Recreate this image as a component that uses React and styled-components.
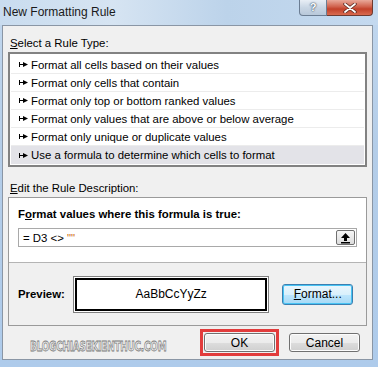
import React from "react";
import styled, { createGlobalStyle } from "styled-components";

const GlobalStyle = createGlobalStyle`
  html, body { margin: 0; padding: 0; }
  body {
    width: 378px;
    height: 367px;
    overflow: hidden;
    font-family: "Liberation Sans", Arial, sans-serif;
    font-size: 11.4px;
    color: #000;
  }
`;

const rules = [
  "Format all cells based on their values",
  "Format only cells that contain",
  "Format only top or bottom ranked values",
  "Format only values that are above or below average",
  "Format only unique or duplicate values",
  "Use a formula to determine which cells to format",
];

const Arrow = () => (
  <svg width="9" height="7" viewBox="0 0 9 7">
    <rect x="0" y="1" width="1" height="5" fill="#000" />
    <rect x="0" y="3" width="5" height="1" fill="#000" />
    <polygon points="4,1 9,3.5 4,6" fill="#000" />
  </svg>
);

const App = () => {
  return (
    <>
      <GlobalStyle />
      <Window>
        <TitleBar>
          <Title>New Formatting Rule</Title>
          <Caption>
            <HelpBtn>?</HelpBtn>
            <CloseBtn>
              <svg width="14" height="10" viewBox="0 0 14 10">
                <path d="M2 1 L12 9 M12 1 L2 9" stroke="#5a2a22" strokeWidth="3.4" strokeLinecap="round" />
                <path d="M2 1 L12 9 M12 1 L2 9" stroke="#fff" strokeWidth="1.8" strokeLinecap="round" />
              </svg>
            </CloseBtn>
          </Caption>
        </TitleBar>
        <Client>
          <Label><u>S</u>elect a Rule Type:</Label>
          <RuleList>
            {rules.map((r, i) => (
              <RuleItem key={r} $selected={i === rules.length - 1}>
                <Arrow />
                <span>{r}</span>
              </RuleItem>
            ))}
          </RuleList>

          <Label><u>E</u>dit the Rule Description:</Label>
          <DescBox>
            <DescTop>
              <BoldLabel>F<u>o</u>rmat values where this formula is true:</BoldLabel>
              <FormulaInput>
                <span>= D3 &lt;&gt; <Quote>""</Quote></span>
                <CollapseBtn>
                  <svg width="11" height="12" viewBox="0 0 11 12">
                    <polygon points="5.5,1 10,6 7,6 7,9 4,9 4,6 1,6" fill="#000" />
                    <rect x="1" y="10" width="9" height="1.5" fill="#000" />
                  </svg>
                </CollapseBtn>
              </FormulaInput>
            </DescTop>
            <DescBottom>
              <BoldLabel>Preview:</BoldLabel>
              <PreviewBox>
                <PreviewInner>AaBbCcYyZz</PreviewInner>
              </PreviewBox>
              <Button $focused $w={71}><u>F</u>ormat...</Button>
            </DescBottom>
          </DescBox>

          <Footer>
            <Watermark>BLOGCHIASEKIENTHUC.COM</Watermark>
            <Highlight>
              <Button $w={71}>OK</Button>
            </Highlight>
            <Button $w={71}>Cancel</Button>
          </Footer>
        </Client>
      </Window>
    </>
  );
};

export default App;

const Window = styled.div`
  width: 378px;
  height: 367px;
  box-sizing: border-box;
  background: linear-gradient(180deg, #c2d8ef 0%, #b4cde8 40%, #aecbeb 100%);
  padding: 0 5px 7px 2px;
  display: flex;
  flex-direction: column;
`;

const TitleBar = styled.div`
  height: 25px;
  display: flex;
  justify-content: space-between;
  align-items: flex-start;
  background: linear-gradient(90deg, #c9dcef 0%, #d6e4f2 30%, #bcd3ea 60%, #c4d9ef 100%);
  margin: 0 -5px 0 -2px;
  padding: 0 5px 0 3px;
`;

const Title = styled.div`
  font-size: 12px;
  line-height: 24px;
  color: #1a1a1a;
`;

const Caption = styled.div`
  display: flex;
`;

const HelpBtn = styled.div`
  width: 28px;
  height: 16px;
  box-sizing: border-box;
  border: 1px solid #6b7d93;
  border-top: none;
  border-radius: 0 0 0 4px;
  background: linear-gradient(180deg, #e8eef5 0%, #c9d6e4 50%, #b8c8da 100%);
  color: #fff;
  font-weight: bold;
  font-size: 11px;
  line-height: 14px;
  text-align: center;
  text-shadow: 0 0 2px #33475e, 0 0 1px #33475e;
`;

const CloseBtn = styled.div`
  width: 46px;
  height: 16px;
  box-sizing: border-box;
  border: 1px solid #6e3a30;
  border-left: none;
  border-top: none;
  border-radius: 0 0 4px 0;
  background: linear-gradient(180deg, #e9a99a 0%, #d0614c 45%, #c2412a 60%, #d96b50 100%);
  display: flex;
  align-items: center;
  justify-content: center;
`;

const Client = styled.div`
  flex: 1;
  background: #f0f0f0;
  border: 1px solid #8a96a5;
  padding: 9px 5px 0 5px;
  display: flex;
  flex-direction: column;
`;

const Label = styled.div`
  line-height: 16px;
  padding-left: 2px;
  margin-bottom: 1px;
`;

const RuleList = styled.div`
  background: #fff;
  border: 2px solid #828282;
  padding: 2px 1px 1px;
  margin-bottom: 13px;
`;

const RuleItem = styled.div`
  height: 17px;
  display: flex;
  align-items: center;
  gap: 3px;
  padding-left: 8px;
  border-bottom: 1px solid ${(p) => (p.$selected ? "transparent" : "#ececec")};
  background: ${(p) => (p.$selected ? "#e3e3e8" : "#fff")};
  &:last-child { border-bottom: none; height: 18px; }
`;

const DescBox = styled.div`
  border: 1px solid #9a9a9a;
  display: flex;
  flex-direction: column;
`;

const DescTop = styled.div`
  background: #fff;
  padding: 8px 9px 15px 9px;
  border-bottom: 1px solid #b4b4b4;
`;

const BoldLabel = styled.div`
  font-weight: bold;
  line-height: 16px;
`;

const FormulaInput = styled.div`
  margin-top: 6px;
  height: 19px;
  box-sizing: border-box;
  border: 1px solid #a9a9a9;
  background: #fff;
  display: flex;
  align-items: center;
  justify-content: space-between;
  padding: 0 1px 0 4px;
`;

const Quote = styled.span`
  color: #d07020;
`;

const CollapseBtn = styled.div`
  width: 19px;
  height: 15px;
  box-sizing: border-box;
  border: 1px solid #707070;
  border-radius: 2px;
  background: linear-gradient(180deg, #f6f6f6 0%, #dcdcdc 100%);
  display: flex;
  align-items: center;
  justify-content: center;
`;

const DescBottom = styled.div`
  background: #f0f0f0;
  height: 62px;
  display: flex;
  align-items: center;
  padding: 0 13px 0 9px;
`;

const PreviewBox = styled.div`
  margin-left: 8px;
  margin-right: 13px;
  width: 198px;
  height: 37px;
  box-sizing: border-box;
  border: 1px solid #808080;
  background: #fff;
  padding: 1px;
`;

const PreviewInner = styled.div`
  height: 100%;
  box-sizing: border-box;
  border: 2px solid #000;
  display: flex;
  align-items: center;
  justify-content: center;
  font-size: 12px;
`;

const Button = styled.div`
  width: ${(p) => p.$w}px;
  height: ${(p) => (p.$focused ? 21 : 19)}px;
  box-sizing: border-box;
  border: 1px solid ${(p) => (p.$focused ? "#3c7fb1" : "#707070")};
  border-radius: 3px;
  background: ${(p) =>
    p.$focused
      ? "linear-gradient(180deg, #eaf6fd 0%, #d9f0fc 50%, #bee6fd 51%, #a7d9f5 100%)"
      : "linear-gradient(180deg, #f2f2f2 0%, #ebebeb 50%, #dddddd 51%, #cfcfcf 100%)"};
  box-shadow: ${(p) => (p.$focused ? "inset 0 0 0 1px #48c4f4" : "inset 0 0 0 1px #fcfcfc")};
  display: flex;
  align-items: center;
  justify-content: center;
  font-size: 12px;
`;

const Footer = styled.div`
  position: relative;
  display: flex;
  justify-content: flex-end;
  align-items: center;
  gap: 10px;
  padding: 3px 7px 0 0;
`;

const Highlight = styled.div`
  border: 3px solid #e23c3c;
  padding: 1px;
`;

const Watermark = styled.div`
  position: absolute;
  left: 22px;
  top: 12px;
  font-family: "DejaVu Sans", sans-serif;
  font-weight: bold;
  font-size: 14px;
  letter-spacing: -0.4px;
  color: #ececec;
  -webkit-text-stroke: 0.8px #7a7a7a;
  transform: scaleX(0.64);
  transform-origin: left center;
  white-space: nowrap;
`;
